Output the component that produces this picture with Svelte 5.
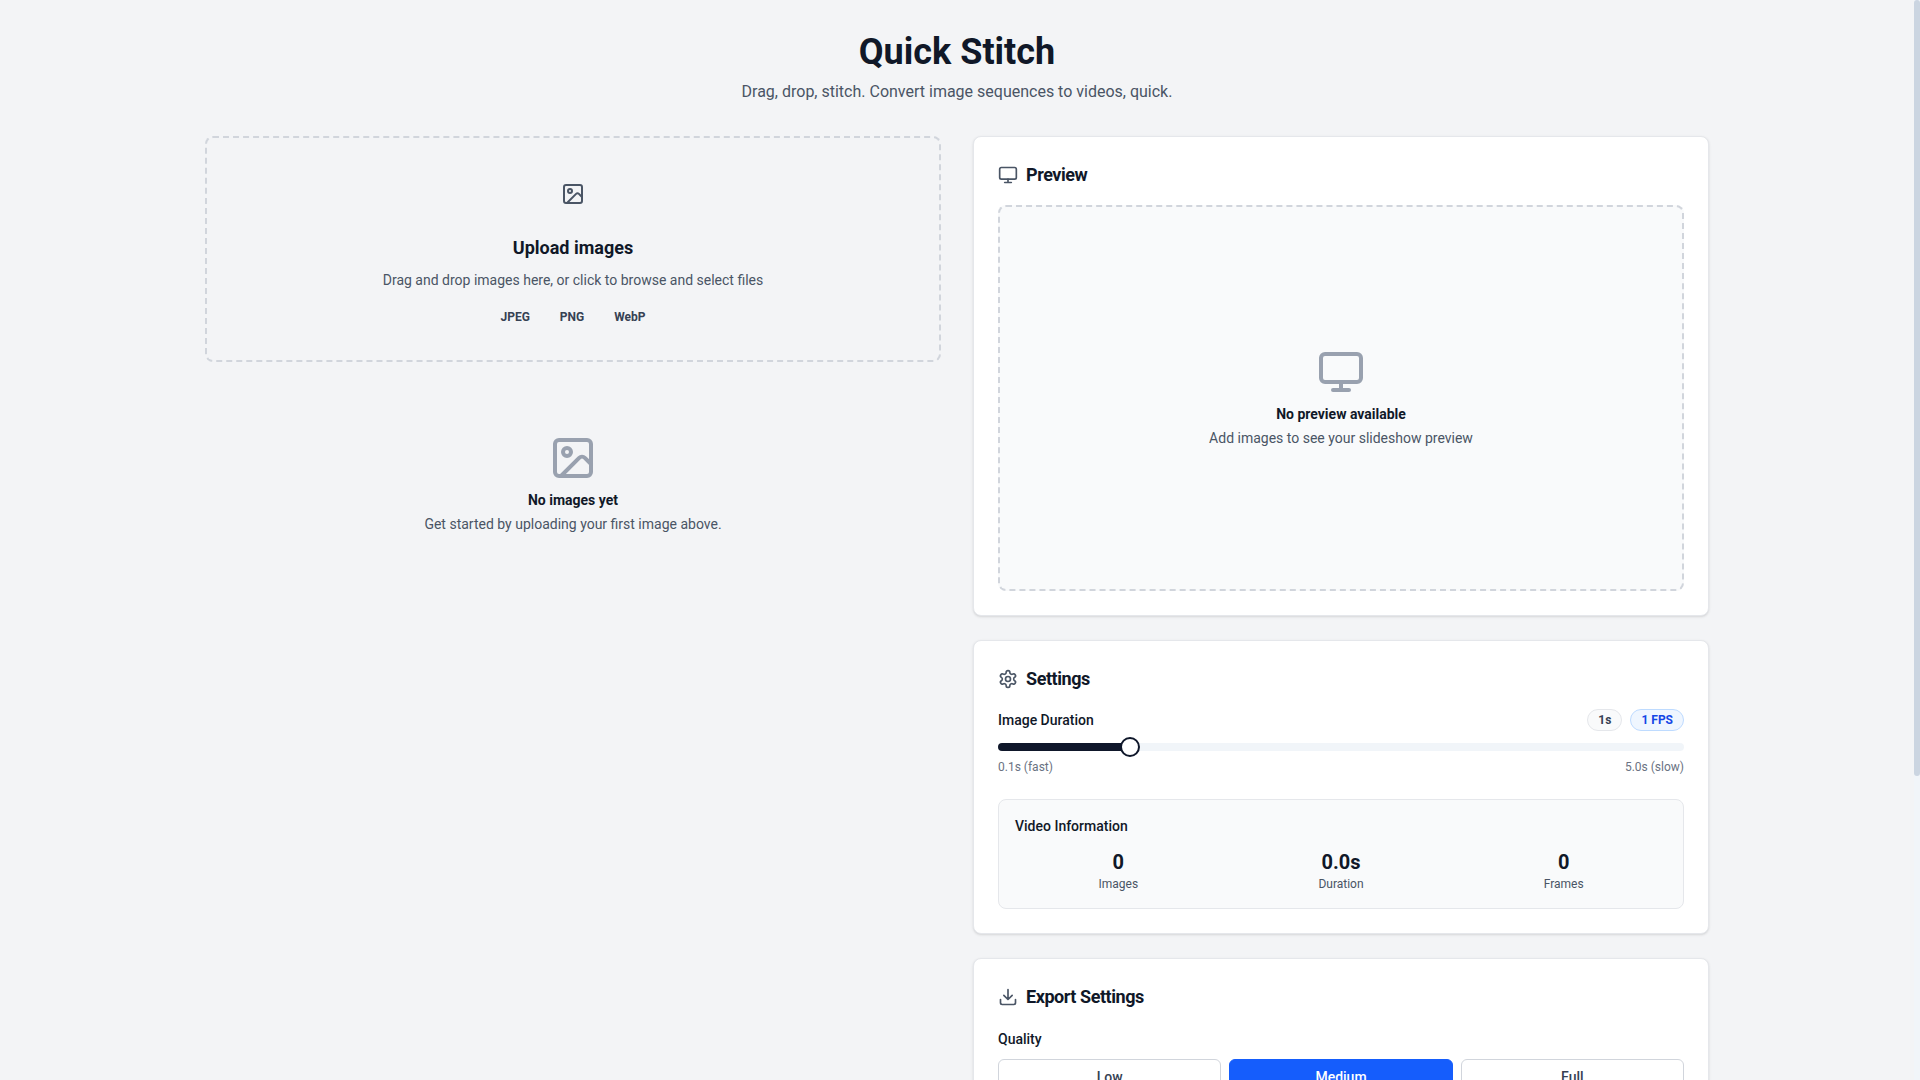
<script lang="ts">
    type Quality = 'Low' | 'Medium' | 'Full';

    const formats: string[] = ['JPEG', 'PNG', 'WebP'];
    const qualities: Quality[] = ['Low', 'Medium', 'Full'];
    const minDuration = 0.1;
    const maxDuration = 5;

    let files = $state<File[]>([]);
    let duration = $state(1);
    let quality = $state<Quality>('Medium');
    let fileInput: HTMLInputElement | undefined;

    let viewHeight = $state(1);
    let contentHeight = $state(1);
    let scrollTop = $state(0);

    let fps = $derived(Math.round(10 / duration) / 10);
    let progress = $derived((duration - minDuration) / (maxDuration - minDuration));
    let stats = $derived([
        { label: 'Images', value: `${files.length}` },
        { label: 'Duration', value: `${(files.length * duration).toFixed(1)}s` },
        { label: 'Frames', value: `${files.length}` }
    ]);

    function addFiles(list: FileList | null | undefined): void {
        if (list) files = [...files, ...Array.from(list)];
    }

    function handleDrop(e: DragEvent): void {
        e.preventDefault();
        addFiles(e.dataTransfer?.files);
    }
</script>

{#snippet imageIcon()}
    <rect x="3" y="3" width="18" height="18" rx="2" />
    <circle cx="9" cy="9" r="2" />
    <path d="m21 15-3.086-3.086a2 2 0 0 0-2.828 0L6 21" />
{/snippet}

{#snippet monitorIcon()}
    <rect x="2" y="3" width="20" height="14" rx="2" />
    <path d="M8 21h8M12 17v4" />
{/snippet}

<div class="page">
    <div class="scroller" bind:clientHeight={viewHeight} onscroll={(e) => (scrollTop = e.currentTarget.scrollTop)}>
        <div class="container" bind:offsetHeight={contentHeight}>
            <header>
                <h1>Quick Stitch</h1>
                <p>Drag, drop, stitch. Convert image sequences to videos, quick.</p>
            </header>

            <main>
                <div class="column">
                    <button class="dropzone" type="button" onclick={() => fileInput?.click()} ondragover={(e) => e.preventDefault()} ondrop={handleDrop}>
                        <span class="upload-icon">
                            <svg class="icon-md" viewBox="0 0 24 24">{@render imageIcon()}</svg>
                        </span>
                        <strong class="upload-title">Upload images</strong>
                        <span class="upload-text">Drag and drop images here, or click to browse and select files</span>
                        <span class="formats">
                            {#each formats as format}
                                <span class="badge plain">{format}</span>
                            {/each}
                        </span>
                    </button>
                    <input bind:this={fileInput} type="file" accept="image/*" multiple hidden aria-label="Upload images" onchange={(e) => addFiles(e.currentTarget.files)}>

                    <div class="empty no-images">
                        <svg class="icon-lg" viewBox="0 0 24 24">{@render imageIcon()}</svg>
                        <h3>No images yet</h3>
                        <p>Get started by uploading your first image above.</p>
                    </div>
                </div>

                <div class="column">
                    <section class="card">
                        <h2>
                            <svg class="icon-sm" viewBox="0 0 24 24">{@render monitorIcon()}</svg>
                            Preview
                        </h2>
                        <div class="empty preview">
                            <svg class="icon-lg" viewBox="0 0 24 24">{@render monitorIcon()}</svg>
                            <h3>No preview available</h3>
                            <p>Add images to see your slideshow preview</p>
                        </div>
                    </section>

                    <section class="card">
                        <h2>
                            <svg class="icon-sm" viewBox="0 0 24 24">
                                <path d="M12.22 2h-.44a2 2 0 0 0-2 2v.18a2 2 0 0 1-1 1.73l-.43.25a2 2 0 0 1-2 0l-.15-.08a2 2 0 0 0-2.73.73l-.22.38a2 2 0 0 0 .73 2.73l.15.1a2 2 0 0 1 1 1.72v.51a2 2 0 0 1-1 1.74l-.15.09a2 2 0 0 0-.73 2.73l.22.38a2 2 0 0 0 2.73.73l.15-.08a2 2 0 0 1 2 0l.43.25a2 2 0 0 1 1 1.73V20a2 2 0 0 0 2 2h.44a2 2 0 0 0 2-2v-.18a2 2 0 0 1 1-1.73l.43-.25a2 2 0 0 1 2 0l.15.08a2 2 0 0 0 2.73-.73l.22-.39a2 2 0 0 0-.73-2.73l-.15-.08a2 2 0 0 1-1-1.74v-.5a2 2 0 0 1 1-1.74l.15-.09a2 2 0 0 0 .73-2.73l-.22-.38a2 2 0 0 0-2.73-.73l-.15.08a2 2 0 0 1-2 0l-.43-.25a2 2 0 0 1-1-1.73V4a2 2 0 0 0-2-2z" />
                                <circle cx="12" cy="12" r="3" />
                            </svg>
                            Settings
                        </h2>
                        <div class="duration-row">
                            <label for="duration">Image Duration</label>
                            <div class="badges">
                                <span class="badge">{duration}s</span>
                                <span class="badge blue">{fps} FPS</span>
                            </div>
                        </div>
                        <input id="duration" type="range" min={minDuration} max={maxDuration} step="0.1" bind:value={duration} style="--fill: {progress}">
                        <div class="range-labels">
                            <span>0.1s (fast)</span>
                            <span>5.0s (slow)</span>
                        </div>

                        <div class="info">
                            <h3>Video Information</h3>
                            <dl>
                                {#each stats as stat}
                                    <div class="stat">
                                        <dt>{stat.label}</dt>
                                        <dd>{stat.value}</dd>
                                    </div>
                                {/each}
                            </dl>
                        </div>
                    </section>

                    <section class="card">
                        <h2>
                            <svg class="icon-sm" viewBox="0 0 24 24">
                                <path d="M21 15v4a2 2 0 0 1-2 2H5a2 2 0 0 1-2-2v-4M7 10l5 5 5-5M12 15V3" />
                            </svg>
                            Export Settings
                        </h2>
                        <div class="quality-label"><span id="quality">Quality</span></div>
                        <div class="qualities" role="group" aria-labelledby="quality">
                            {#each qualities as q}
                                <button type="button" class:active={quality === q} aria-pressed={quality === q} onclick={() => (quality = q)}>{q}</button>
                            {/each}
                        </div>
                    </section>
                </div>
            </main>
        </div>
    </div>

    <div class="scrollbar" aria-hidden="true">
        <div class="thumb" style="height: {(viewHeight / contentHeight) * 100}%; margin-top: {(scrollTop / contentHeight) * viewHeight}px"></div>
    </div>
</div>

<style>
    :global(body) { margin: 0; background: #f3f4f6; }

    .page, .page * { box-sizing: border-box; }

    .page {
        display: flex;
        height: 100vh;
        background: #f3f4f6;
        color: #101828;
        font-family: Roboto, sans-serif;
        font-size: 16px;
        line-height: 24px;
    }

    .scroller { flex: 1; min-width: 0; overflow-y: auto; scrollbar-width: none; }
    .scrollbar { flex: none; width: 6px; overflow: hidden; background: #f1f5f9; }
    .thumb { border-radius: 3px; background: #cbd5e1; }

    .container {
        max-width: 1536px;
        margin: 0 auto;
        padding: 32px 16px 384px;
    }

    h1, h2, h3, p, dl, dd { margin: 0; }

    header { text-align: center; margin-bottom: 32px; }
    h1 { margin-bottom: 8px; font-size: 36px; line-height: 40px; font-weight: 700; }
    header p { color: #4a5565; }

    main { display: grid; grid-template-columns: 1fr 1fr; gap: 32px; }
    .column { display: flex; flex-direction: column; gap: 24px; min-width: 0; }

    svg {
        flex-shrink: 0;
        fill: none;
        stroke: currentColor;
        stroke-width: 2;
        stroke-linecap: round;
        stroke-linejoin: round;
    }

    .icon-sm { width: 20px; height: 20px; color: #4a5565; }
    .icon-md { width: 24px; height: 24px; color: #4a5565; }
    .icon-lg { width: 48px; height: 48px; color: #99a1af; }

    .dropzone {
        display: flex;
        flex-direction: column;
        align-items: center;
        padding: 32px;
        border: 2px dashed #d1d5dc;
        border-radius: 8px;
        background: transparent;
        color: inherit;
        font-family: inherit;
        cursor: pointer;
    }

    .upload-icon {
        display: flex;
        align-items: center;
        justify-content: center;
        width: 48px;
        height: 48px;
        margin-bottom: 16px;
    }

    .upload-title { margin-bottom: 8px; font-size: 18px; line-height: 28px; font-weight: 700; }
    .upload-text { margin-bottom: 16px; color: #4a5565; font-size: 14px; line-height: 20px; }
    .formats, .badges { display: flex; gap: 8px; }

    .badge {
        padding: 2px 10px;
        border: 1px solid #e5e7eb;
        border-radius: 11px;
        background: #f9fafb;
        color: #364153;
        font-size: 12px;
        line-height: 16px;
        font-weight: 700;
    }

    .badge.plain { border-color: transparent; background: transparent; }
    .badge.blue { border-color: #bedbff; background: #eff6ff; color: #1447e6; }

    .empty { display: flex; flex-direction: column; align-items: center; font-size: 14px; line-height: 20px; text-align: center; }
    .empty h3 { margin: 8px 0 4px; font-size: 14px; font-weight: 700; }
    .empty p { color: #4a5565; }
    .no-images { padding: 48px 0; }

    .preview {
        justify-content: center;
        aspect-ratio: 16 / 9;
        border: 2px dashed #d1d5dc;
        border-radius: 8px;
        background: #f9fafb;
    }

    .card {
        padding: 24px;
        border: 1px solid #e5e7eb;
        border-radius: 8px;
        background: #fff;
        box-shadow: 0 1px 3px rgba(0, 0, 0, 0.1), 0 1px 2px -1px rgba(0, 0, 0, 0.1);
    }

    h2 {
        display: flex;
        align-items: center;
        gap: 8px;
        margin-bottom: 16px;
        font-size: 18px;
        line-height: 28px;
        font-weight: 700;
        letter-spacing: -0.025em;
    }

    .duration-row { display: flex; align-items: center; justify-content: space-between; margin-bottom: 12px; }
    .duration-row label, .info h3, .quality-label span { font-size: 14px; font-weight: 500; }
    .duration-row label, .info h3 { line-height: 20px; }

    input[type='range'] {
        display: block;
        width: 100%;
        height: 8px;
        margin: 0 0 8px;
        appearance: none;
        border-radius: 4px;
        background: linear-gradient(to right, #0f172a calc(10px + (100% - 20px) * var(--fill)), #f1f5f9 0);
        cursor: pointer;
    }

    input[type='range']::-webkit-slider-thumb {
        appearance: none;
        box-sizing: border-box;
        width: 20px;
        height: 20px;
        border: 2px solid #0f172a;
        border-radius: 50%;
        background: #fff;
    }

    .range-labels { display: flex; justify-content: space-between; color: #6a7282; font-size: 12px; line-height: 16px; }

    .info { margin-top: 24px; padding: 16px; border: 1px solid #e5e7eb; border-radius: 8px; background: #f9fafb; }
    .info h3 { margin-bottom: 12px; }
    dl { display: grid; grid-template-columns: repeat(3, 1fr); gap: 16px; text-align: center; }
    .stat { display: flex; flex-direction: column-reverse; }
    dd { font-size: 20px; line-height: 28px; font-weight: 700; }
    dt { color: #4a5565; font-size: 12px; line-height: 16px; }

    .quality-label { margin-bottom: 8px; }
    .qualities { display: grid; grid-template-columns: repeat(3, 1fr); gap: 8px; }

    .qualities button {
        padding: 7px 12px;
        border: 1px solid #d1d5dc;
        border-radius: 6px;
        background: #fff;
        color: #364153;
        font-family: inherit;
        font-size: 14px;
        line-height: 20px;
        font-weight: 500;
        cursor: pointer;
    }

    .qualities button.active { border-color: #155dfc; background: #155dfc; color: #fff; }

    @media (max-width: 1023px) {
        main { grid-template-columns: 1fr; }
    }
</style>
